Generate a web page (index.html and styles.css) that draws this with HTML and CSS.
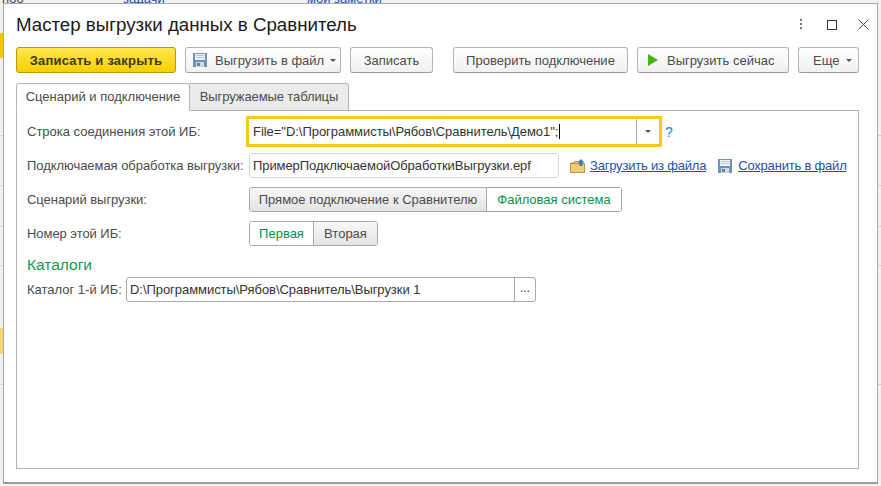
FILE: index.html
```html
<!DOCTYPE html>
<html lang="ru">
<head>
    <meta charset="UTF-8">
    <title>Мастер выгрузки данных в Сравнитель</title>
    <link rel="stylesheet" href="styles.css">
</head>
<body>

    <!-- Application behind the modal window -->
    <div class="backdrop">
        <span class="back-link back-link-0">ноо</span>
        <span class="back-link back-link-1">задачи</span>
        <span class="back-link back-link-2">мои заметки</span>
        <span class="back-mark back-mark-1"></span>
        <span class="back-mark back-mark-2"></span>
        <span class="back-line back-line-1"></span>
        <span class="back-line back-line-2"></span>
        <span class="back-line back-line-3"></span>
        <span class="back-line back-line-4"></span>
        <span class="back-line back-line-5"></span>
    </div>

    <div class="window">
        <div class="title-bar">
            <h1 class="title">Мастер выгрузки данных в Сравнитель</h1>
            <div class="window-controls">
                <svg class="ctl-more" width="4" height="12" viewBox="0 0 4 12"><path d="M1 0h2v2H1zM1 4h2v2H1zM1 8h2v2H1z" fill="#777"/></svg>
                <svg class="ctl-max" width="10" height="10" viewBox="0 0 10 10"><rect x=".5" y=".5" width="9" height="9" fill="none" stroke="#333"/></svg>
                <svg class="ctl-close" width="11" height="11" viewBox="0 0 11 11"><path d="M.5.5l10 10M10.500.5l-10 10" fill="none" stroke="#444"/></svg>
            </div>
        </div>

        <div class="toolbar">
            <button class="btn btn-primary">Записать и закрыть</button>
            <button class="btn btn-save">
                <svg class="floppy" width="14" height="14" viewBox="0 0 14 14"><path d="M0 0h14v14H0z" fill="#6d93ba"/><path d="M2 1h10v6H2z" fill="#eef3f8"/><path d="M3 9h8v5H3z" fill="#d3d7db"/><path d="M4 10h3v3H4z" fill="#6d7f91"/><path d="M3 2.500h8M3 4.500h8" stroke="#b4c8da"/></svg>
                Выгрузить в файл
                <span class="caret"></span>
            </button>
            <button class="btn btn-write">Записать</button>
            <button class="btn btn-check">Проверить подключение</button>
            <button class="btn btn-run">
                <svg width="10" height="12" viewBox="0 0 10 12"><path d="M0 0l10 6-10 6z" fill="#48b31b"/></svg>
                Выгрузить сейчас
            </button>
            <button class="btn btn-more">Еще <span class="caret"></span></button>
        </div>

        <div class="tabs">
            <div class="tab tab-active">Сценарий и подключение</div>
            <div class="tab">Выгружаемые таблицы</div>
        </div>

        <div class="panel">
            <div class="row row-conn">
                <label class="label label-conn">Строка соединения этой ИБ:</label>
                <div class="field field-focus">
                    <span class="field-text">File="D:\Программисты\Рябов\Сравнитель\Демо1";<span class="cursor"></span></span>
                    <span class="field-drop"><span class="caret"></span></span>
                </div>
                <span class="help">?</span>
            </div>

            <div class="row row-proc">
                <label class="label label-wide">Подключаемая обработка выгрузки:</label>
                <div class="field field-proc"><span class="field-text">ПримерПодключаемойОбработкиВыгрузки.epf</span></div>
                <svg class="icon-folder" width="15" height="14" viewBox="0 0 15 14">
                    <path d="M.5 4.500h9v-2h-5l-1 1.500h-3z" fill="#f3d98f" stroke="#b98f3e"/>
                    <path d="M.5 4.500h14v9H.5z" fill="#f1cd72" stroke="#b98f3e"/>
                    <path d="M11 0l3.500 3.500H12.500V7h-3V3.500H7.500z" fill="#2f7fb8"/>
                </svg>
                <a class="link link-load">Загрузить из файла</a>
                <svg class="icon-save" width="14" height="14" viewBox="0 0 14 14"><path d="M0 0h14v14H0z" fill="#6d93ba"/><path d="M2 1h10v6H2z" fill="#eef3f8"/><path d="M3 9h8v5H3z" fill="#d3d7db"/><path d="M4 10h3v3H4z" fill="#6d7f91"/><path d="M3 2.500h8M3 4.500h8" stroke="#b4c8da"/></svg>
                <a class="link">Сохранить в файл</a>
            </div>

            <div class="row row-scenario">
                <label class="label label-wide">Сценарий выгрузки:</label>
                <div class="switch">
                    <span class="switch-item switch-direct">Прямое подключение к Сравнителю</span>
                    <span class="switch-item switch-on switch-files">Файловая система</span>
                </div>
            </div>

            <div class="row row-number">
                <label class="label label-wide">Номер этой ИБ:</label>
                <div class="switch">
                    <span class="switch-item switch-on switch-first">Первая</span>
                    <span class="switch-item switch-second">Вторая</span>
                </div>
            </div>

            <h2 class="group-title">Каталоги</h2>

            <div class="row row-dir">
                <label class="label label-dir">Каталог 1-й ИБ:</label>
                <div class="field field-dir">
                    <span class="field-text">D:\Программисты\Рябов\Сравнитель\Выгрузки 1</span>
                    <span class="field-pick">...</span>
                </div>
            </div>
        </div>
    </div>

</body>
</html>
```

FILE: styles.css
```css
html, body {
    height: 100%;
}

body {
    margin: 0;
    padding: 3px 3px 2px 3px;
    box-sizing: border-box;
    overflow: hidden;
    background-color: #f1f1f1;
    font-family: "Liberation Sans", Arial, sans-serif;
    font-size: 13px;
    color: #4b4b4b;
}

/* Application behind the modal window */
.backdrop {
    position: absolute;
    left: 0;
    top: 0;
    width: 881px;
    height: 486px;
    overflow: hidden;
}

.back-link {
    position: absolute;
    top: -9px;
    font-size: 13px;
    color: #1a50b5;
}

.back-link-0 { left: 2px; color: #444; }
.back-link-1 { left: 123px; }
.back-link-2 { left: 307px; }

.back-mark {
    position: absolute;
    left: 0;
    width: 3px;
    background-color: #f5d678;
}

.back-mark-1 { top: 33px; height: 25px; background-color: #f2c300; }
.back-mark-2 { top: 328px; height: 26px; }

.back-line {
    position: absolute;
    left: 0;
    width: 881px;
    height: 1px;
    background-color: #d4d4d4;
}

.back-line-1 { top: 135px; }
.back-line-2 { top: 185px; }
.back-line-3 { top: 226px; }
.back-line-4 { top: 265px; }
.back-line-5 { top: 384px; }

/* Modal window */
.window {
    position: relative;
    box-sizing: border-box;
    width: 875px;
    height: 481px;
    padding: 0 18px 13px 12px;
    display: flex;
    flex-direction: column;
    background-color: #fff;
    border: 1px solid #a8a8a8;
    border-bottom: 2px solid #9a9a9a;
}

.title-bar {
    box-sizing: border-box;
    display: flex;
    align-items: center;
    justify-content: space-between;
    height: 43px;
    padding-bottom: 2px;
    flex: none;
}

.title {
    margin: 0;
    font-size: 18.7px;
    font-weight: normal;
    color: #1a1a1a;
}

.window-controls {
    display: flex;
    align-items: center;
    margin-right: -10px;
}

.ctl-more { margin-right: 24px; }
.ctl-max { margin-right: 21px; }

/* Toolbar */
.toolbar {
    display: flex;
    flex: none;
    height: 26px;
}

.btn {
    box-sizing: border-box;
    height: 26px;
    padding: 0;
    display: flex;
    align-items: center;
    justify-content: center;
    font-family: inherit;
    font-size: 13px;
    color: #4b4b4b;
    background: linear-gradient(#ffffff, #f1f1f1);
    border: 1px solid #b4b4b4;
    border-bottom-color: #9c9c9c;
    border-radius: 3px;
}

.btn-primary {
    width: 160px;
    font-weight: bold;
    letter-spacing: 0.2px;
    color: #3d3a1e;
    background: linear-gradient(#ffe74f, #f7cf00);
    border-color: #b59a10;
}

.btn-save { width: 156px; margin-left: 9px; justify-content: flex-start; padding-left: 7px; }
.btn-write { width: 83px; margin-left: 9px; }
.btn-check { width: 175px; margin-left: 20px; }
.btn-run { width: 152px; margin-left: 9px; justify-content: flex-start; padding-left: 10px; }
.btn-more { width: 61px; margin-left: 9px; justify-content: flex-start; padding-left: 14px; }

.btn-save .floppy { margin-right: 8px; }
.btn-save .caret { margin-left: 6px; }
.btn-run svg { margin-right: 9px; }
.btn-more .caret { margin-left: 7px; }

.caret {
    display: inline-block;
    width: 0;
    height: 0;
    margin-left: 7px;
    border-left: 3px solid transparent;
    border-right: 3px solid transparent;
    border-top: 3px solid #555;
}

/* Tabs */
.tabs {
    display: flex;
    flex: none;
    height: 28px;
    margin-top: 10px;
    margin-bottom: -1px;
    position: relative;
}

.tab {
    box-sizing: border-box;
    height: 28px;
    line-height: 26px;
    text-align: center;
    width: 159px;
    letter-spacing: -0.1px;
    background-color: #ebebeb;
    border: 1px solid #b4b4b4;
    border-left: none;
    border-radius: 0 3px 0 0;
}

.tab-active {
    width: 174px;
    letter-spacing: 0;
    background-color: #fff;
    border-left: 1px solid #b4b4b4;
    border-bottom-color: #fff;
    border-radius: 3px 3px 0 0;
}

/* Page panel */
.panel {
    flex: 1;
    box-sizing: border-box;
    padding: 5px 10px 0 10px;
    border: 1px solid #b0b0b0;
}

.row {
    display: flex;
    align-items: center;
}

.row-conn { height: 31px; }
.row-proc { height: 25px; margin-top: 6px; }
.row-scenario { height: 25px; margin-top: 9px; }
.row-number { height: 25px; margin-top: 9px; }
.row-dir { height: 25px; }

.label {
    flex: none;
}

.label-conn { width: 219px; }
.label-wide { width: 222px; letter-spacing: -0.05px; }
.label-dir { width: 99px; }

.field {
    box-sizing: border-box;
    display: flex;
    flex: none;
    align-items: center;
    height: 25px;
    color: #333;
    background-color: #fff;
    border: 1px solid #d6d6d6;
    border-radius: 3px;
}

.field-text {
    flex: 1;
    padding-left: 3px;
    white-space: nowrap;
    letter-spacing: -0.08px;
}

.field-focus {
    width: 416px;
    height: 31px;
    border: 3px solid #f9c81e;
    border-radius: 0;
}

.field-focus .field-text {
    padding-left: 4px;
    letter-spacing: -0.04px;
}

.field-dir .field-text {
    letter-spacing: -0.05px;
}

.cursor {
    display: inline-block;
    width: 1px;
    height: 15px;
    margin-left: 1px;
    vertical-align: -3px;
    background-color: #000;
}

.field-drop {
    width: 22px;
    height: 25px;
    display: flex;
    align-items: center;
    justify-content: center;
    border-left: 1px solid #a8a8a8;
}

.field-drop .caret {
    margin-left: 0;
}

.help {
    margin-left: 3px;
    font-size: 14px;
    color: #1f7ac4;
}

.field-proc { width: 310px; }
.icon-folder { margin-left: 11px; margin-right: 5px; flex: none; }
.icon-save { margin-left: 12px; margin-right: 6px; flex: none; }

.link {
    color: #1a50b5;
    text-decoration: underline;
    white-space: nowrap;
    letter-spacing: -0.2px;
}

.switch {
    display: flex;
    flex: none;
    height: 25px;
    box-sizing: border-box;
    border: 1px solid #a8a8a8;
    border-radius: 3px;
    overflow: hidden;
}

.switch-item {
    line-height: 23px;
    text-align: center;
    background: linear-gradient(#f8f8f8, #e4e4e4);
}

.switch-on {
    color: #0c8f4e;
    background: #fff;
}

.switch-direct { width: 236px; border-right: 1px solid #a8a8a8; }
.switch-files { width: 134px; }
.switch-first { width: 63px; border-right: 1px solid #a8a8a8; }
.switch-second { width: 63px; }

.group-title {
    margin: 9px 0 0 0;
    height: 22px;
    line-height: 19px;
    font-size: 15.500px;
    font-weight: normal;
    color: #0c9a52;
}

.field-dir {
    width: 410px;
    border-color: #a8a8a8;
}

.field-pick {
    width: 20px;
    height: 23px;
    line-height: 21px;
    text-align: center;
    font-size: 12px;
    border-left: 1px solid #a8a8a8;
}
```
